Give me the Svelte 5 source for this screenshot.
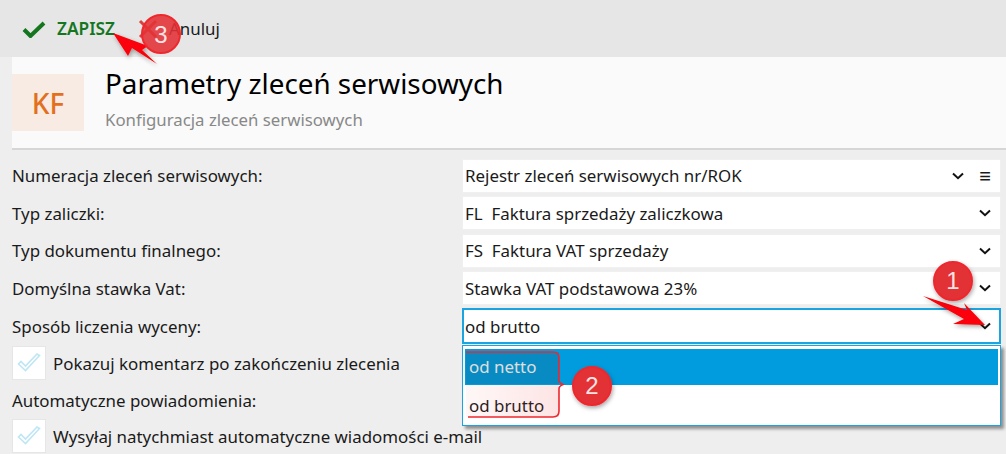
<script lang="ts">
const rows = [
	{ label: 'Numeracja zleceń serwisowych:', value: 'Rejestr zleceń serwisowych nr/ROK', menu: true },
	{ label: 'Typ zaliczki:', value: 'FL  Faktura sprzedaży zaliczkowa' },
	{ label: 'Typ dokumentu finalnego:', value: 'FS  Faktura VAT sprzedaży' },
	{ label: 'Domyślna stawka Vat:', value: 'Stawka VAT podstawowa 23%' },
];
</script>

{#snippet chevron()}
	<svg class="chevron" width="12" height="8" viewBox="0 0 12 8"><path d="M1 1.5 6 6.2 11 1.5" fill="none" stroke="#111" stroke-width="2" /></svg>
{/snippet}

{#snippet checkbox()}
	<span class="checkbox">
		<svg width="26" height="22" viewBox="0 0 26 22"><path d="M2.5 12 9.5 18.5 23.5 3.5 21 2 9.5 14 5 9.5Z" fill="#fff" stroke="#bfe6f5" stroke-width="1.6" /></svg>
	</span>
{/snippet}

<div class="page">
	<div class="toolbar">
		<button class="save">
			<svg width="24" height="18" viewBox="0 0 24 18"><path d="M2 9.5 8.5 16 22 3" fill="none" stroke="#14761f" stroke-width="4" /></svg>
			ZAPISZ
		</button>
		<button class="cancel">
			<svg width="22" height="20" viewBox="0 0 22 20"><path d="M3 2 19 18M19 2 3 18" fill="none" stroke="#d9433f" stroke-width="3" /></svg>
			Anuluj
		</button>
	</div>

	<div class="header">
		<div class="tile">KF</div>
		<div class="titles">
			<h1>Parametry zleceń serwisowych</h1>
			<p>Konfiguracja zleceń serwisowych</p>
		</div>
	</div>

	<div class="form">
		{#each rows as row}
			<div class="row">
				<span class="label">{row.label}</span>
				<div class="select" class:with-menu={row.menu}>
					<span class="value">{row.value}</span>
					{@render chevron()}
					{#if row.menu}<span class="burger">≡</span>{/if}
				</div>
			</div>
		{/each}
		<div class="row focused">
			<span class="label">Sposób liczenia wyceny:</span>
			<div class="select open">
				<span class="value">od brutto</span>
				{@render chevron()}
			</div>
		</div>
		<div class="check-row">
			{@render checkbox()}
			<span>Pokazuj komentarz po zakończeniu zlecenia</span>
		</div>
		<div class="section">Automatyczne powiadomienia:</div>
		<div class="check-row">
			{@render checkbox()}
			<span>Wysyłaj natychmiast automatyczne wiadomości e-mail</span>
		</div>

		<div class="dropdown">
			<div class="option active">od netto</div>
			<div class="option">od brutto</div>
		</div>
	</div>

	<!-- screenshot annotations -->
	<svg class="notes" width="1006" height="454" viewBox="0 0 1006 454">
		<defs>
			<filter id="soft" x="-30%" y="-30%" width="160%" height="160%">
				<feDropShadow dx="1" dy="2" stdDeviation="2" flood-color="#000" flood-opacity="0.35" />
			</filter>
			<linearGradient id="fade" x1="0" x2="1" y1="0" y2="0">
				<stop offset="0" stop-color="#f04040" stop-opacity="0.04" />
				<stop offset="1" stop-color="#f04040" stop-opacity="0.14" />
			</linearGradient>
		</defs>
		<rect x="466" y="385" width="93" height="32" fill="url(#fade)" />
		<rect x="466" y="352" width="93" height="32" fill="#333" opacity="0.16" />
		<path d="M466 352H553Q559 352 559 358V380Q559 383 563 384.500 559 386 559 389V411Q559 417 553 417H468" fill="none" stroke="#f0272c" stroke-width="1.6" />
		<path d="M923 296 967 310 964 303 985 325 953 324 964 319Z" fill="#fb0007" filter="url(#soft)" />
		<path d="M113 33 148 46 142 50 157 64 132 48 128 56Z" fill="#fb0007" filter="url(#soft)" />
		<circle cx="953" cy="281" r="19" fill="#e23136" stroke="#f0282d" stroke-width="2" filter="url(#soft)" />
		<circle cx="592" cy="386" r="19" fill="#e23136" stroke="#f0282d" stroke-width="2" filter="url(#soft)" />
		<circle cx="161" cy="34" r="19" fill="#e23136" fill-opacity="0.88" stroke="#f0282d" stroke-width="2" />
		<text x="953" y="289" class="num">1</text>
		<text x="592" y="394" class="num">2</text>
		<text x="161" y="43" class="num">3</text>
	</svg>
</div>

<style>
	:global(body) {
		margin: 0;
		background: #eeeeee;
	}

	.page {
		position: relative;
		width: 1006px;
		height: 454px;
		overflow: hidden;
		font-family: "Noto Sans", "Open Sans", sans-serif;
		font-size: 16.9px;
		color: #1a1a1a;
	}

	.toolbar {
		display: flex;
		align-items: center;
		gap: 22px;
		height: 57px;
		padding-left: 22px;
		box-sizing: border-box;
		background: #e6e6e6;
	}

	.toolbar button {
		display: flex;
		align-items: center;
		gap: 11px;
		padding: 0;
		border: none;
		background: none;
		font: inherit;
		color: inherit;
	}

	.toolbar .save {
		font-size: 17.3px;
		font-weight: 600;
		color: #14761f;
	}

	.toolbar .cancel {
		gap: 10px;
	}

	.header {
		display: flex;
		align-items: center;
		gap: 21px;
		height: 93px;
		margin-left: 12px;
		box-sizing: border-box;
		background: #fafafa;
		border-bottom: 2px solid #d6d6d6;
	}

	.tile {
		display: flex;
		align-items: center;
		justify-content: center;
		width: 72px;
		height: 57px;
		background: #f8ebe4;
		color: #e2701d;
		font-size: 28px;
		font-weight: 500;
	}

	.titles {
		margin-top: -2px;
		margin-bottom: 8px;
	}

	h1 {
		margin: 0 0 6px;
		font-size: 27.8px;
		font-weight: 400;
		line-height: 38px;
		color: #000;
	}

	.titles p {
		margin: 0;
		font-size: 16.8px;
		line-height: 24px;
		color: #888;
	}

	.form {
		position: relative;
		padding: 8px 5px 0 12px;
	}

	.row {
		display: grid;
		grid-template-columns: 450px 1fr;
		align-items: center;
		height: 35px;
		margin-bottom: 2.5px;
	}

	.select {
		display: flex;
		align-items: center;
		height: 34px;
		padding: 0 9px 0 2px;
		box-sizing: border-box;
		background: #fff;
		border: 1px solid #f0f0f0;
	}

	.select .value {
		flex: 1;
		white-space: pre;
	}

	.select.with-menu {
		padding-right: 9px;
	}

	.burger {
		width: 12px;
		margin-left: 15px;
		font-size: 20px;
		line-height: 20px;
		text-align: center;
	}

	.select.open {
		height: 36px;
		border: 2px solid #1aa5e0;
		padding-left: 1px;
		padding-right: 8px;
	}

	.check-row {
		display: flex;
		align-items: center;
		gap: 7px;
		height: 35px;
	}

	.checkbox {
		display: flex;
		align-items: center;
		justify-content: center;
		width: 34px;
		height: 34px;
		box-sizing: border-box;
		background: #fff;
		border: 1px solid #e6e6e6;
	}

	.section {
		height: 24px;
		line-height: 24px;
		margin: 8px 0 6px;
	}

	.dropdown {
		position: absolute;
		left: 462px;
		top: 195px;
		width: 539px;
		height: 81px;
		box-sizing: border-box;
		padding: 3px 2px 0 2px;
		background: #fff;
		border: 1px solid #1aa5e0;
		box-shadow: 3px 3px 3px rgba(0, 0, 0, 0.4);
	}

	.option {
		height: 41px;
		line-height: 41px;
		padding-left: 4px;
	}

	.option.active {
		height: 36px;
		line-height: 36px;
		background: #009cde;
		color: #fff;
	}

	.notes {
		position: absolute;
		left: 0;
		top: 0;
		pointer-events: none;
	}

	.num {
		font-family: "Liberation Sans", sans-serif;
		font-size: 24px;
		fill: #fbe3e3;
		text-anchor: middle;
	}
</style>
